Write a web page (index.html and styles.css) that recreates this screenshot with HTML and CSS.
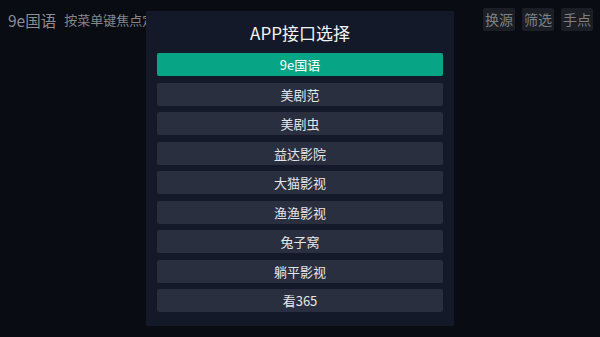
FILE: index.html
```html
<!DOCTYPE html>
<html lang="zh-CN">
<head>
    <meta charset="UTF-8">
    <meta name="viewport" content="width=device-width, initial-scale=1.0">
    <title>9e国语</title>
    <link rel="stylesheet" href="styles.css">
</head>
<body>
    <div class="header">
        <div class="title">9e国语</div>
        <div class="hint">按菜单键焦点定位到列表</div>
        <div class="actions">
            <button class="tool">换源</button>
            <button class="tool">筛选</button>
            <button class="tool">手点</button>
        </div>
    </div>

    <div class="mask">
        <div class="dialog">
            <div class="dialog-title">APP接口选择</div>
            <div class="list">
                <div class="item active">9e国语</div>
                <div class="item">美剧范</div>
                <div class="item">美剧虫</div>
                <div class="item">益达影院</div>
                <div class="item">大猫影视</div>
                <div class="item">渔渔影视</div>
                <div class="item">兔子窝</div>
                <div class="item">躺平影视</div>
                <div class="item">看365</div>
            </div>
        </div>
    </div>
</body>
</html>
```

FILE: styles.css
```css
/* styles.css */
body {
    font-family: "Noto Sans CJK SC", "Noto Sans", sans-serif;
    margin: 0;
    padding: 0;
    width: 600px;
    height: 337px;
    overflow: hidden;
    background: #090c13;
}

.header {
    display: flex;
    align-items: center;
    height: 39px;
    padding: 0 7px 0 8px;
}
.header .title {
    font-size: 15.5px;
    color: #8c8e92;
    margin-right: 8px;
}
.header .hint {
    font-size: 13px;
    color: #85878b;
    white-space: nowrap;
}
.actions {
    display: flex;
    gap: 7px;
    margin-left: auto;
}
.tool {
    background-color: #1b1e24;
    border: none;
    border-radius: 2px;
    color: #7e8084;
    font-family: inherit;
    font-size: 14px;
    width: 32px;
    height: 23px;
    padding: 0;
    line-height: 23px;
}

/* 弹窗 */
.mask {
    position: fixed;
    inset: 0;
    display: flex;
    align-items: center;
    justify-content: center;
}
.dialog {
    width: 308px;
    height: 315px;
    box-sizing: border-box;
    background: #131928;
    padding: 0 11px 15px;
}
.dialog-title {
    height: 42px;
    line-height: 43px;
    text-align: center;
    color: #f2f3f5;
    font-size: 17px;
}
.list {
    display: flex;
    flex-direction: column;
    gap: 6.5px;
}
.item {
    height: 23px;
    line-height: 23px;
    border-radius: 2px;
    background: #2a2f3f;
    color: #e6e7ea;
    font-size: 13px;
    text-align: center;
}
.item.active {
    background: #07a585;
    color: #ffffff;
}
```
